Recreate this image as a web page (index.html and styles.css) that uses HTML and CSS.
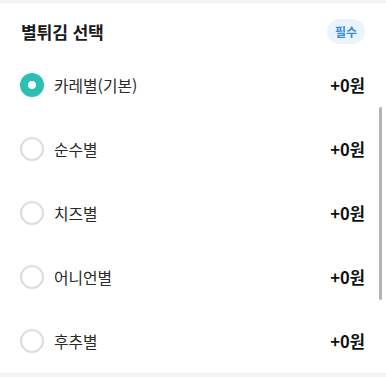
FILE: index.html
```html
<!DOCTYPE html>
<html lang="ko">
<head>
<meta charset="utf-8">
<link rel="stylesheet" href="styles.css">
</head>
<body>
<div class="panel">
  <div class="strip"></div>
  <div class="header">
    <h2 class="title">별튀김 선택</h2>
    <span class="badge">필수</span>
  </div>
  <ul class="options">
    <li class="option"><span class="radio checked"></span><span class="label">카레별(기본)</span><span class="price">+0원</span></li>
    <li class="option"><span class="radio"></span><span class="label">순수별</span><span class="price">+0원</span></li>
    <li class="option"><span class="radio"></span><span class="label">치즈별</span><span class="price">+0원</span></li>
    <li class="option"><span class="radio"></span><span class="label">어니언별</span><span class="price">+0원</span></li>
    <li class="option"><span class="radio"></span><span class="label">후추별</span><span class="price">+0원</span></li>
  </ul>
  <div class="strip bottom"></div>
  <div class="scrollbar"></div>
</div>
</body>
</html>
```

FILE: styles.css
```css
* { box-sizing: border-box; }
html, body { margin: 0; padding: 0; background: #fff; }
body {
  font-family: "Noto Sans CJK KR", "Noto Sans", sans-serif;
  color: #1f1f1f;
}
.panel { position: relative; width: 386px; height: 377px; overflow: hidden; }
.strip { height: 3px; background: #f3f4f6; }
.strip.bottom { height: 4px; }
.header {
  height: 50px;
  padding: 6px 21px 0 21px;
  display: flex;
  align-items: center;
  justify-content: space-between;
}
.title { margin: 0; font-size: 17.2px; font-weight: 700; color: #1a1a1a; letter-spacing: -0.2px; }
.badge {
  display: inline-flex;
  align-items: center;
  justify-content: center;
  width: 38px;
  height: 25px;
  border-radius: 13px;
  background: #eaf4fd;
  color: #3a8bd6;
  font-size: 12px;
  font-weight: 700;
  margin-top: 1px;
}
.options { list-style: none; margin: 0; padding: 0; }
.option {
  height: 64px;
  display: flex;
  align-items: center;
  padding: 0 21px 0 20px;
}
.radio {
  width: 24px;
  height: 24px;
  border-radius: 50%;
  border: 2px solid #dcdcdc;
  background: #fff;
  flex: none;
}
.radio.checked { border: 8px solid #2dbfb4; }
.label { margin-left: 10px; font-size: 15.8px; color: #2a2a2a; flex: 1; }
.price { font-size: 16.5px; font-weight: 700; color: #111; }
.scrollbar {
  position: absolute;
  right: 4px;
  top: 107px;
  width: 3px;
  height: 193px;
  border-radius: 2px;
  background: #b3b3b3;
}
```
